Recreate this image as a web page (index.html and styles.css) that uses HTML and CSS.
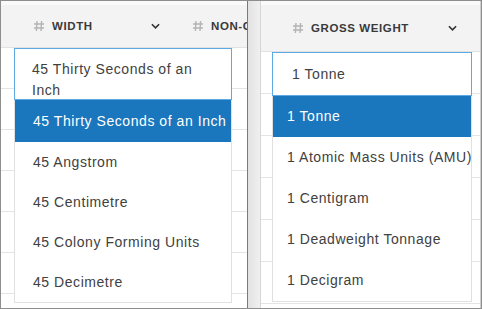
FILE: index.html
```html
<!DOCTYPE html>
<html lang="en">
  <head>
    <title>Unit pickers</title>
    <link rel="stylesheet" href="styles.css">
  </head>
  <body>
    <div class="frame">
      <section class="panel panel-left">
        <div class="top-strip"></div>
        <header class="head">
          <div class="col">
            <span class="col-name">
              <svg class="hash" viewBox="0 0 12 12"><path d="M4 1 L3.4 11 M8.6 1 L8 11 M1 4 H11 M1 8 H11"/></svg>
              WIDTH
            </span>
            <svg class="chev" viewBox="0 0 10 6"><path d="M1 1 L5 5 L9 1"/></svg>
          </div>
          <div class="col">
            <span class="col-name">
              <svg class="hash" viewBox="0 0 12 12"><path d="M4 1 L3.4 11 M8.6 1 L8 11 M1 4 H11 M1 8 H11"/></svg>
              NON-CONFORMING
            </span>
          </div>
        </header>
        <div class="rows">
          <div class="row"></div>
          <div class="row"></div>
          <div class="row"></div>
          <div class="row"></div>
          <div class="row"></div>
          <div class="row"></div>
        </div>

        <div class="picker picker-left">
          <div class="picker-input">45 Thirty Seconds of an Inch</div>
          <ul class="options">
            <li class="selected">45 Thirty Seconds of an Inch</li>
            <li>45 Angstrom</li>
            <li>45 Centimetre</li>
            <li>45 Colony Forming Units</li>
            <li>45 Decimetre</li>
          </ul>
        </div>
      </section>

      <div class="gutter"></div>

      <section class="panel panel-right">
        <div class="top-strip"></div>
        <header class="head">
          <div class="col">
            <span class="col-name">
              <svg class="hash" viewBox="0 0 12 12"><path d="M4 1 L3.4 11 M8.6 1 L8 11 M1 4 H11 M1 8 H11"/></svg>
              GROSS WEIGHT
            </span>
            <svg class="chev" viewBox="0 0 10 6"><path d="M1 1 L5 5 L9 1"/></svg>
          </div>
        </header>
        <div class="rows">
          <div class="row"></div>
          <div class="row"></div>
          <div class="row"></div>
          <div class="row"></div>
          <div class="row"></div>
          <div class="row"></div>
        </div>

        <div class="picker picker-right">
          <div class="picker-input">1 Tonne</div>
          <ul class="options">
            <li class="selected">1 Tonne</li>
            <li>1 Atomic Mass Units (AMU)</li>
            <li>1 Centigram</li>
            <li>1 Deadweight Tonnage</li>
            <li>1 Decigram</li>
          </ul>
        </div>
      </section>
    </div>
  </body>
</html>
```

FILE: styles.css
```css
* {
  box-sizing: border-box;
}

body {
  margin: 0;
  font-family: "Liberation Sans", Arial, sans-serif;
  color: #3c3c3c;
  background: white;
}

.frame {
  display: flex;
  width: 482px;
  height: 309px;
  border: 1px solid #8e8e8e;
  overflow: hidden;
}

.panel {
  position: relative;
  background: white;
  overflow: hidden;
}

.panel-left {
  width: 247px;
  border-right: 1px solid #7a7a7a;
}

.gutter {
  width: 12px;
  background: linear-gradient(to right, #e2e2e2, #f0f0f0);
}

.panel-right {
  flex: 1;
  border-left: 1px solid #d6d6d6;
  border-right: 1px solid #cfcfcf;
}

.top-strip {
  height: 4px;
  background: #fafafa;
}

.head {
  display: flex;
  align-items: center;
  height: 43px;
  padding-left: 32px;
  background: #f3f3f3;
  border-bottom: 1px solid #e2e2e2;
  white-space: nowrap;
}

.panel-right .head {
  height: 47px;
  padding-left: 31px;
}

.col {
  display: flex;
  align-items: center;
  justify-content: space-between;
  width: 127px;
  margin-right: 32px;
  flex-shrink: 0;
}

.panel-right .col {
  width: 165px;
}

.col-name {
  display: flex;
  align-items: center;
  gap: 7px;
  font-size: 11.5px;
  font-weight: bold;
  letter-spacing: 0.6px;
  color: #3a3a3a;
}

.hash {
  width: 12px;
  height: 12px;
  fill: none;
  stroke: #b4b4b4;
  stroke-width: 1.4;
}

.chev {
  width: 9px;
  height: 6px;
  fill: none;
  stroke: #333;
  stroke-width: 1.8;
}

.row {
  height: 41px;
  border-bottom: 1px solid #e4e4e4;
}

.panel-right .row {
  height: 42px;
}

.picker {
  position: absolute;
  font-size: 14px;
  letter-spacing: 0.55px;
  color: #414141;
}

.picker-left {
  left: 13px;
  top: 47px;
  width: 218px;
}

.picker-right {
  left: 11px;
  top: 51px;
  width: 200px;
}

.picker-input {
  height: 52px;
  overflow: hidden;
  border: 1px solid #5ca8e2;
  background: white;
  padding: 10px 17px 0;
  line-height: 21px;
}

.picker-right .picker-input {
  height: 44px;
  padding: 11px 19px 0;
  line-height: 20px;
}

.options {
  list-style: none;
  margin: 0;
  padding: 0;
  background: white;
  border: 1px solid #e0e0e0;
  border-top: none;
}

.options li {
  height: 40px;
  line-height: 40px;
  padding-left: 18px;
  white-space: nowrap;
  overflow: hidden;
}

.picker-right .options li {
  height: 41px;
  line-height: 41px;
  padding-left: 14px;
}

.options li.selected {
  background: #1a76bd;
  color: white;
  height: 42px;
  line-height: 42px;
}

.picker-right .options li.selected {
  height: 41px;
  line-height: 41px;
}
```
